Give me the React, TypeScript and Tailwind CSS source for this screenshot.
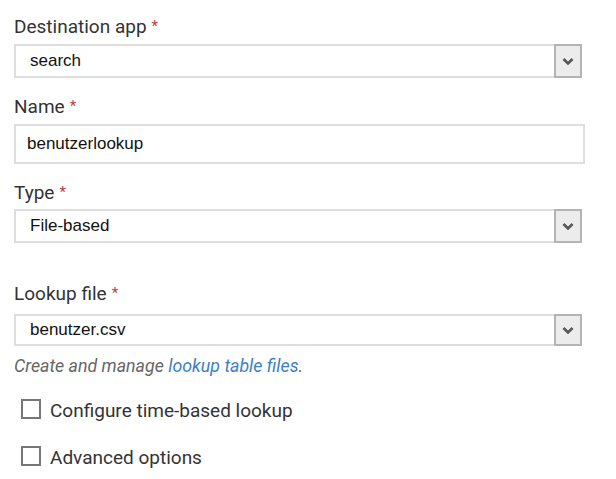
import React from "react";

const Chevron = () => (
  <svg width="12" height="9" viewBox="0 0 12 9">
    <path d="M1.5 2 L6 6.5 L10.5 2" fill="none" stroke="#555" strokeWidth="2.6" strokeLinecap="butt" />
  </svg>
);

const Label = ({ text }: { text: string }) => (
  <div className="text-[19px] leading-[22px] text-[#333] font-['Roboto',sans-serif]">
    <span>{text}</span>
    <span className="ml-[5px] text-[#b8403f] text-[15px] align-top relative top-[-1px]">*</span>
  </div>
);

const Select = ({ value, h }: { value: string; h: string }) => (
  <div className={`flex ${h} w-[568px] border-2 border-[#dedede] bg-white`}>
    <div className="flex-1 flex items-center pl-[14px] text-[17px] text-[#111] font-['Liberation_Sans',Arial,sans-serif]">
      {value}
    </div>
    <div className="w-[28px] flex items-center justify-center bg-[#ececec] border-2 border-[#b4b4b4] -my-[2px] -mr-[2px]">
      <Chevron />
    </div>
  </div>
);

const Check = ({ text }: { text: string }) => (
  <div className="ml-[7px] flex items-center gap-[9px]">
    <div className="w-[20px] h-[20px] border-2 border-[#777] bg-white shrink-0" />
    <span className="relative top-[2px] text-[19px] leading-[22px] text-[#333]">{text}</span>
  </div>
);

export default function App() {
  return (
    <div className="w-[616px] h-[479px] bg-white pl-[14px] pt-[16px] font-['Roboto',sans-serif] text-[#333]">
      <Label text="Destination app" />
      <div className="mt-[6px]">
        <Select value="search" h="h-[34px]" />
      </div>
      <div className="mt-[18px]">
        <Label text="Name" />
      </div>
      <div className="mt-[6px] h-[40px] w-[571px] border-2 border-[#dedede] bg-white flex items-center pl-[11px] text-[17px] text-[#111] font-['Liberation_Sans',Arial,sans-serif]">
        benutzerlookup
      </div>
      <div className="mt-[18px]">
        <Label text="Type" />
      </div>
      <div className="mt-[5px]">
        <Select value="File-based" h="h-[34px]" />
      </div>
      <div className="mt-[40px]">
        <Label text="Lookup file" />
      </div>
      <div className="mt-[9px]">
        <Select value="benutzer.csv" h="h-[32px]" />
      </div>
      <div className="mt-[10px] text-[17.8px] italic leading-[20px] text-[#666]">
        Create and manage <span className="text-[#3d7fc4]">lookup table files</span>.
      </div>
      <div className="mt-[22px]">
        <Check text="Configure time-based lookup" />
      </div>
      <div className="mt-[25px]">
        <Check text="Advanced options" />
      </div>
    </div>
  );
}
